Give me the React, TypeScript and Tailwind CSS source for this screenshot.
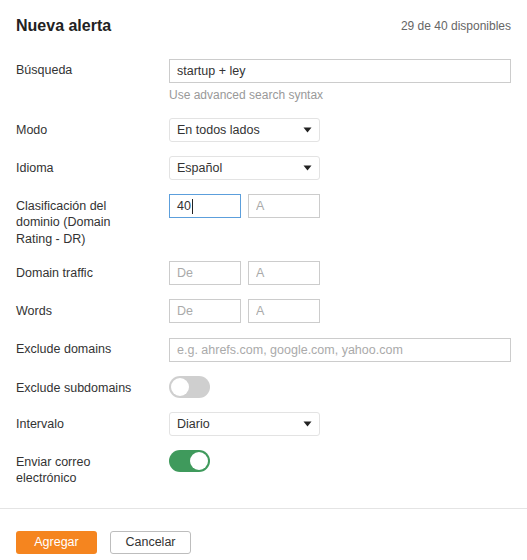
import { ReactNode } from 'react'

const font = { fontFamily: '"Liberation Sans", Arial, Helvetica, sans-serif' }

const Row = ({ label, children }: { label: ReactNode; children: ReactNode }) => (
  <div className="flex">
    <div className="w-[153px] shrink-0 pt-[3.5px] text-[12.5px] leading-[16.5px] text-[#333]">
      <div className="w-[118px]">{label}</div>
    </div>
    <div className="flex-1">{children}</div>
  </div>
)

const Select = ({ value }: { value: string }) => (
  <div className="flex h-6 w-[151px] items-center justify-between rounded-[3px] border border-[#e3e3e3] bg-white pl-[7px] pr-[7px] text-[12.5px] text-[#333]">
    <span>{value}</span>
    <svg width="9" height="6" viewBox="0 0 9 6">
      <path d="M0.5 0.5h8L4.5 5.5z" fill="#222" />
    </svg>
  </div>
)

const TextBox = ({ placeholder, className = 'w-[72px]' }: { placeholder: string; className?: string }) => (
  <input
    readOnly
    placeholder={placeholder}
    className={`h-6 border border-[#ccc] bg-white px-[7px] text-[12.5px] text-[#333] outline-none placeholder:text-[#aaa] ${className}`}
    style={font}
  />
)

const Range = ({ from }: { from?: string }) => (
  <div className="flex gap-[7px]">
    {from ? (
      <div className="flex h-6 w-[72px] items-center border border-[#5c9fdc] px-[7px] text-[12.5px] text-[#333]">
        {from}
        <span className="ml-px inline-block h-[15px] w-px bg-[#222]" />
      </div>
    ) : (
      <TextBox placeholder="De" />
    )}
    <TextBox placeholder="A" />
  </div>
)

const Toggle = ({ on }: { on?: boolean }) => (
  <div className={`relative h-[22px] w-[41px] rounded-full ${on ? 'bg-[#3f9a5c]' : 'bg-[#cfcfcf]'}`}>
    <div className={`absolute top-[2px] h-[18px] w-[18px] rounded-full bg-white ${on ? 'right-[2px]' : 'left-[2px]'}`} />
  </div>
)

export default function App() {
  return (
    <div className="h-[560px] w-[527px] bg-white" style={font}>
      <div className="flex h-[52px] items-center justify-between px-4">
        <h1 className="text-[16px] font-bold text-[#222]">Nueva alerta</h1>
        <span className="text-[12px] text-[#666]">29 de 40 disponibles</span>
      </div>

      <div className="flex flex-col gap-[14px] px-4 pt-[6px]">
        <Row label="Búsqueda">
          <input
            readOnly
            value="startup + ley"
            className="h-6 w-full border border-[#ccc] px-[7px] text-[12.5px] text-[#333] outline-none"
            style={font}
          />
          <p className="mt-1 text-[12px] leading-[17px] text-[#999]">Use advanced search syntax</p>
        </Row>
        <Row label="Modo">
          <Select value="En todos lados" />
        </Row>
        <Row label="Idioma">
          <Select value="Español" />
        </Row>
        <Row label="Clasificación del dominio (Domain Rating - DR)">
          <Range from="40" />
        </Row>
        <Row label="Domain traffic">
          <Range />
        </Row>
        <Row label="Words">
          <Range />
        </Row>
        <Row label="Exclude domains">
          <TextBox placeholder="e.g. ahrefs.com, google.com, yahoo.com" className="w-full" />
        </Row>
        <Row label="Exclude subdomains">
          <Toggle />
        </Row>
        <Row label="Intervalo">
          <Select value="Diario" />
        </Row>
        <Row label="Enviar correo electrónico">
          <Toggle on />
        </Row>
      </div>

      <div className="mt-[21px] border-t border-[#e4e4e4] px-4 pt-[22px]">
        <div className="flex gap-[13px]">
          <button className="h-[23px] w-[81px] rounded-[3px] bg-[#f5851f] text-[12.5px] text-white">Agregar</button>
          <button className="h-[23px] w-[81px] rounded-[3px] border border-[#bdbdbd] bg-white text-[12.5px] text-[#333]">
            Cancelar
          </button>
        </div>
      </div>
    </div>
  )
}
